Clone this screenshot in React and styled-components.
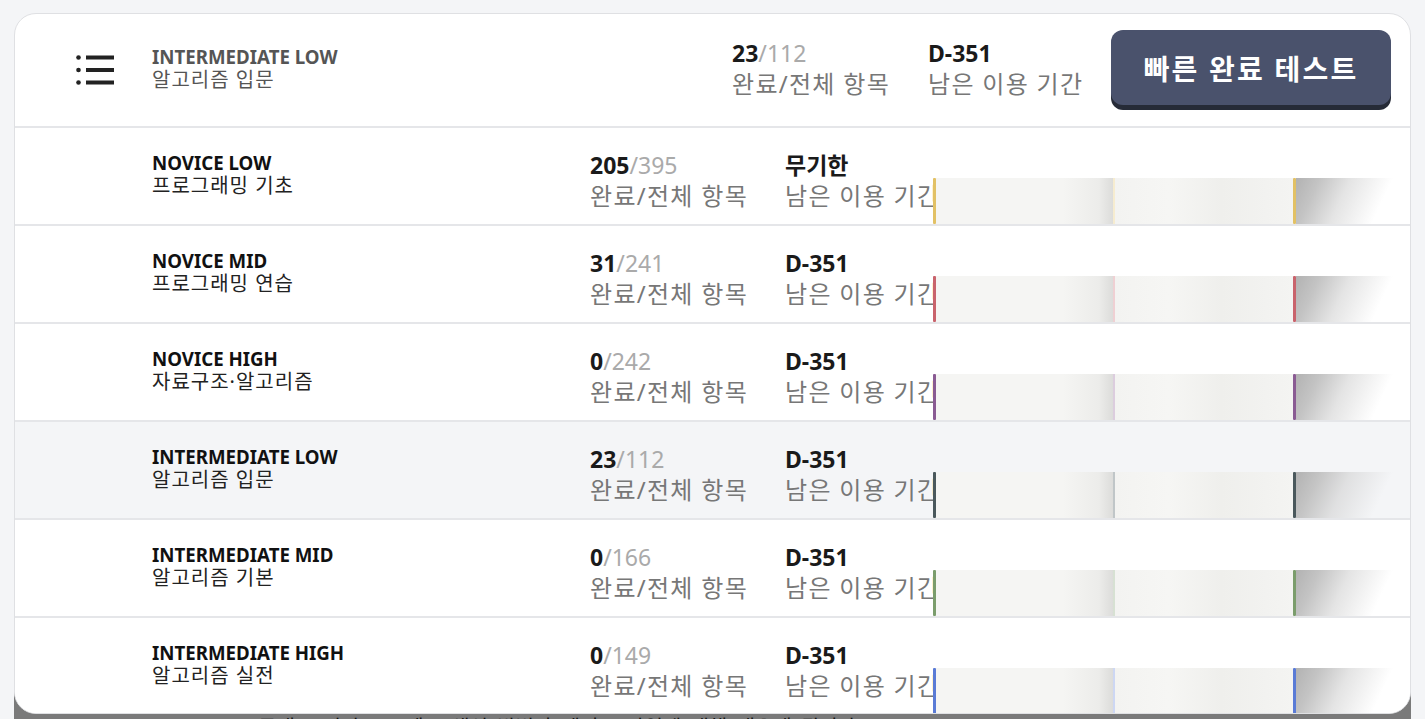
import styled, { createGlobalStyle } from "styled-components";

const GlobalStyle = createGlobalStyle`
  html, body {
    margin: 0;
    padding: 0;
    background: #f4f5f7;
    height: 100%;
    overflow: hidden;
  }
  body {
    font-family: "Noto Sans", "Noto Sans CJK KR", sans-serif;
  }
  * { box-sizing: border-box; }
`;

const Page = styled.div`
  padding: 13px 0 0 14px;
  height: 719px;
`;

const Frame = styled.div`
  width: 1397px;
  height: 720px;
  background: linear-gradient(to bottom, transparent 0, transparent 620px, #7a7a7a 620px);
`;

const Card = styled.div`
  width: 1397px;
  height: 701px;
  background: #fff;
  border: 1px solid #dfe0e3;
  border-radius: 22px;
  overflow: hidden;
`;

const Header = styled.div`
  display: flex;
  align-items: center;
  height: 114px;
  padding: 0 19px 0 61px;
  border-bottom: 2px solid #e5e6e9;
`;

const MenuButton = styled.div`
  width: 38px;
  height: 30px;
  margin-right: 38px;
  display: flex;
  color: #222;
`;

const TitleBlock = styled.div`
  flex: 1;
  display: flex;
  flex-direction: column;
  color: ${(p) => (p.$muted ? "#555" : "#111")};
`;

const Level = styled.div`
  font-size: 18.7px;
  font-weight: 700;
  line-height: 20px;
`;

const Course = styled.div`
  font-size: 20px;
  line-height: 26px;
  letter-spacing: 1px;
  color: ${(p) => (p.$muted ? "#555" : "#222")};
`;

const Stat = styled.div`
  width: ${(p) => p.$w}px;
  padding-top: ${(p) => p.$shift}px;
  display: flex;
  flex-direction: column;
  white-space: nowrap;
`;

const StatValue = styled.div`
  font-size: 23px;
  line-height: 28px;
  font-weight: 700;
  color: #1a1a1a;
  span {
    font-weight: 400;
    color: #aaa;
  }
`;

const StatLabel = styled.div`
  font-size: 24px;
  line-height: 34px;
  letter-spacing: 1.3px;
  color: #777;
`;

const QuickButton = styled.button`
  width: 280px;
  height: 75px;
  margin-bottom: 5px;
  border: none;
  border-radius: 12px;
  background: #4a526c;
  box-shadow: 0 5px 0 #262b37;
  color: #fff;
  font-family: inherit;
  font-size: 28px;
  font-weight: 700;
  letter-spacing: 2.2px;
  cursor: pointer;
`;

const Row = styled.div`
  display: grid;
  grid-template-columns: 438px 195px 148px 1fr;
  align-items: center;
  height: 98px;
  padding-left: 137px;
  border-bottom: 2px solid #e5e6e9;
  background: ${(p) => (p.$active ? "#f4f5f7" : "#fff")};
`;

const Book = styled.div`
  position: relative;
  align-self: end;
  display: flex;
  height: 46px;
  width: 463px;
`;

const Spine = styled.div`
  width: 3px;
  background: ${(p) => p.$color};
  border-radius: 1px;
`;

const LeftPage = styled.div`
  width: 177px;
  background: linear-gradient(
    to right,
    #f5f5f3 0%,
    #f5f5f3 72%,
    #ececea 92%,
    #dcdcda 100%
  );
`;

const Gutter = styled.div`
  width: 2px;
  background: ${(p) => p.$color};
  opacity: 0.3;
`;

const RightPage = styled.div`
  width: 178px;
  background: linear-gradient(
    to right,
    #f3f3f1 0%,
    #f6f6f4 30%,
    #efefec 60%,
    #f2f2f0 85%,
    #f4f4f2 100%
  );
`;

const Shadow = styled.div`
  width: 100px;
  background: linear-gradient(
    115deg,
    #b2b2b2 0%,
    #c4c4c4 20%,
    rgba(210, 210, 210, 0.6) 45%,
    rgba(255, 255, 255, 0) 80%
  );
`;

const BandText = styled.div`
  padding: 2px 0 0 244px;
  font-size: 20px;
  line-height: 24px;
  color: #111;
  white-space: nowrap;
  word-spacing: 4px;
`;

const rows = [
  { level: "NOVICE LOW", course: "프로그래밍 기초", done: 205, total: 395, remain: "무기한", color: "#e2c165" },
  { level: "NOVICE MID", course: "프로그래밍 연습", done: 31, total: 241, remain: "D-351", color: "#c9636c" },
  { level: "NOVICE HIGH", course: "자료구조·알고리즘", done: 0, total: 242, remain: "D-351", color: "#8a5b93" },
  { level: "INTERMEDIATE LOW", course: "알고리즘 입문", done: 23, total: 112, remain: "D-351", color: "#4a585c", active: true },
  { level: "INTERMEDIATE MID", course: "알고리즘 기본", done: 0, total: 166, remain: "D-351", color: "#7b9d6c" },
  { level: "INTERMEDIATE HIGH", course: "알고리즘 실전", done: 0, total: 149, remain: "D-351", color: "#5a7bd6" },
];

function MenuIcon() {
  return (
    <svg width="38" height="30" viewBox="0 0 38 30">
      <circle cx="2.5" cy="2.5" r="2.3" fill="currentColor" />
      <circle cx="2.5" cy="15" r="2.3" fill="currentColor" />
      <circle cx="2.5" cy="27.5" r="2.3" fill="currentColor" />
      <rect x="10" y="0.5" width="28" height="4" fill="currentColor" />
      <rect x="10" y="13" width="28" height="4" fill="currentColor" />
      <rect x="10" y="25.5" width="28" height="4" fill="currentColor" />
    </svg>
  );
}

function Progress({ done, total, remain, widths, shift = 0 }) {
  return (
    <>
      <Stat $w={widths[0]} $shift={shift}>
        <StatValue>
          {done}
          <span>/{total}</span>
        </StatValue>
        <StatLabel>완료/전체 항목</StatLabel>
      </Stat>
      <Stat $w={widths[1]} $shift={shift}>
        <StatValue>{remain}</StatValue>
        <StatLabel>남은 이용 기간</StatLabel>
      </Stat>
    </>
  );
}

function OpenBook({ color }) {
  return (
    <Book>
      <Spine $color={color} />
      <LeftPage />
      <Gutter $color={color} />
      <RightPage />
      <Spine $color={color} />
      <Shadow />
    </Book>
  );
}

export default function App() {
  return (
    <Page>
      <GlobalStyle />
      <Frame>
        <Card>
          <Header>
            <MenuButton>
              <MenuIcon />
            </MenuButton>
            <TitleBlock $muted>
              <Level>INTERMEDIATE LOW</Level>
              <Course $muted>알고리즘 입문</Course>
            </TitleBlock>
            <Progress done={23} total={112} remain="D-351" widths={[196, 183]} />
            <QuickButton>빠른 완료 테스트</QuickButton>
          </Header>
          {rows.map((r) => (
            <Row key={r.level} $active={r.active}>
              <TitleBlock>
                <Level>{r.level}</Level>
                <Course>{r.course}</Course>
              </TitleBlock>
              <Progress
                done={r.done}
                total={r.total}
                remain={r.remain}
                widths={[195, 148]}
                shift={12}
              />
              <OpenBook color={r.color} />
            </Row>
          ))}
        </Card>
        <BandText>클래스 정의 오브젝트 생성 방법과 메서드 타입에 대해 배우게 됩니다</BandText>
      </Frame>
    </Page>
  );
}
